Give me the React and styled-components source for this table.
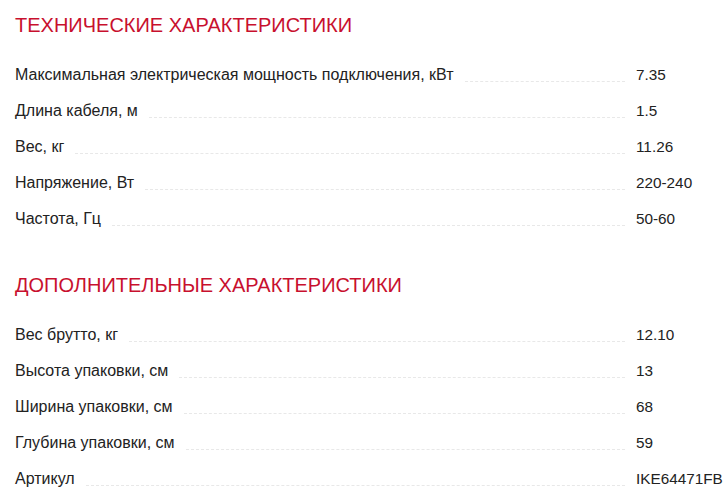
import React from "react";
import styled, { createGlobalStyle } from "styled-components";

const GlobalStyle = createGlobalStyle`
  body {
    margin: 0;
    background: #ffffff;
    font-family: "Liberation Sans", Arial, sans-serif;
    color: #222222;
  }
`;

const sections = [
  {
    title: "Технические характеристики",
    rows: [
      ["Максимальная электрическая мощность подключения, кВт", "7.35"],
      ["Длина кабеля, м", "1.5"],
      ["Вес, кг", "11.26"],
      ["Напряжение, Вт", "220-240"],
      ["Частота, Гц", "50-60"],
    ],
  },
  {
    title: "Дополнительные характеристики",
    rows: [
      ["Вес брутто, кг", "12.10"],
      ["Высота упаковки, см", "13"],
      ["Ширина упаковки, см", "68"],
      ["Глубина упаковки, см", "59"],
      ["Артикул", "IKE64471FB"],
    ],
  },
];

const SpecRow = ({ label, value }) => (
  <Row>
    <Label>{label}</Label>
    <Dots />
    <Value>{value}</Value>
  </Row>
);

const App = () => (
  <>
    <GlobalStyle />
    <Page>
      {sections.map((section) => (
        <Section key={section.title}>
          <Title>{section.title}</Title>
          <List>
            {section.rows.map(([label, value]) => (
              <SpecRow key={label} label={label} value={value} />
            ))}
          </List>
        </Section>
      ))}
    </Page>
  </>
);

export default App;

const Page = styled.div`
  padding: 12px 0 0 15px;
  display: flex;
  flex-direction: column;
  gap: 32px;
`;

const Section = styled.section`
  display: flex;
  flex-direction: column;
`;

const Title = styled.h2`
  margin: 0 0 22px;
  font-weight: 400;
  font-size: 20px;
  line-height: 26px;
  text-transform: uppercase;
  color: #c8102e;
`;

const List = styled.div`
  display: flex;
  flex-direction: column;
`;

const Row = styled.div`
  display: flex;
  align-items: flex-end;
  height: 36px;
  line-height: 18px;
  padding-bottom: 12px;
  box-sizing: border-box;
`;

const Label = styled.span`
  font-size: 16px;
  white-space: nowrap;
`;

const Dots = styled.span`
  flex: 1;
  margin: 0 11px 2px 11px;
  border-bottom: 1px dashed #e8e8e8;
`;

const Value = styled.span`
  width: 92px;
  font-size: 15.3px;
  white-space: nowrap;
`;
